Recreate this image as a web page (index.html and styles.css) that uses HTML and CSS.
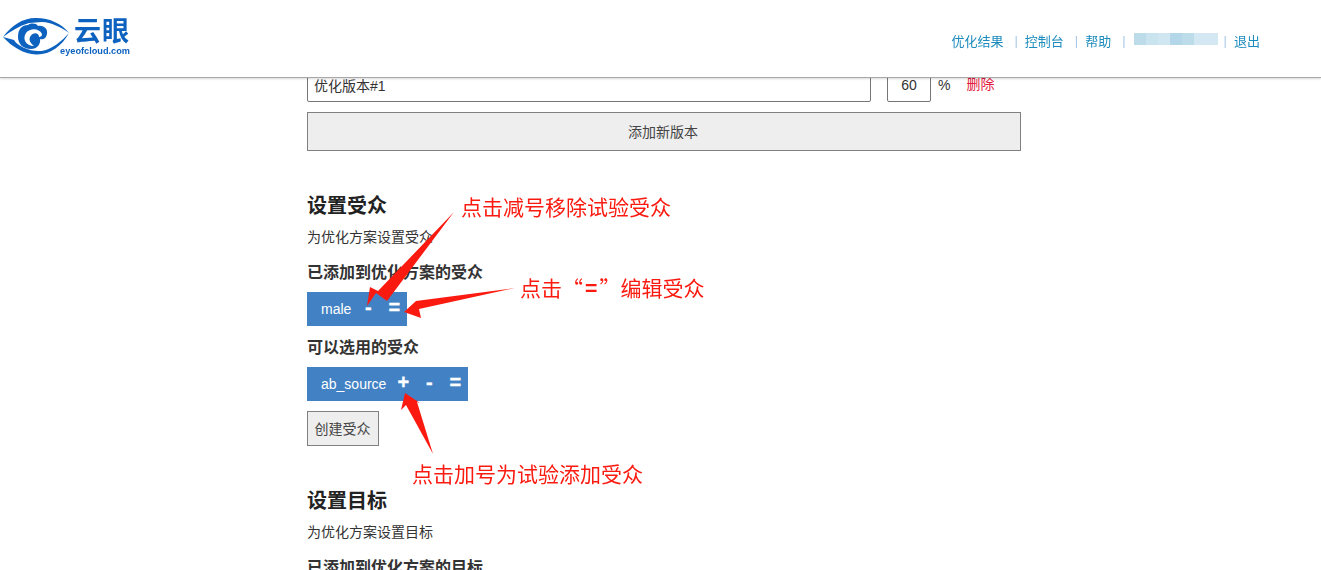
FILE: index.html
```html
<!DOCTYPE html>
<html lang="zh-CN">
<head>
<meta charset="utf-8">
<title>云眼</title>
<link rel="stylesheet" href="styles.css">
</head>
<body>
<header class="topbar">
  <a class="logo" href="#">
    <svg class="logo-eye" width="72" height="42" viewBox="0 15 72 42">
      <path d="M3 37C11 26 22 18 36 18C50 18 62 24 69 33C61 27 51 22.500 42 22L29 23C19 26 11 31 3 37Z" fill="#0d62c0"/>
      <path d="M3 37C12 47 24 54 36 54.500C50 55 62 46 69 33C61 42 53 48 44 50.500C33 53 18 47 14 40Z" fill="#0d62c0"/>
      <path d="M18 37C18 29 22 25 28 25C31 23 36 23 38 26C44 25 48 29 47 34C46 39 42 40 40 39C41 44 37 49 31 49C23 49 18 44 18 37Z" fill="#0d62c0"/>
      <path d="M42 34C39 28 30 28 26 33C22 39 26 46 34 46C30 43 28 39 31 35.500C34 32 39 33 39 37C41 37 42 36 42 34Z" fill="#fff"/>
    </svg>
    <span class="logo-words">
      <span class="logo-cn">云眼</span>
      <span class="logo-en">eyeofcloud.com</span>
    </span>
  </a>
  <nav class="nav">
    <a href="#">优化结果</a><i class="sep">|</i>
    <a href="#">控制台</a><i class="sep">|</i>
    <a href="#">帮助</a><i class="sep">|</i>
    <span class="blur-name"><b></b><b></b><b></b><b></b><b></b><b></b><b></b></span><i class="sep">|</i>
    <a href="#">退出</a>
  </nav>
</header>

<main class="content">
  <div class="version-row">
    <input class="name-input" type="text" value="优化版本#1">
    <input class="pct-input" type="text" value="60">
    <span class="pct">%</span>
    <a class="del" href="#">删除</a>
  </div>
  <button class="add-version" type="button">添加新版本</button>

  <h2 class="title first">设置受众</h2>
  <p class="desc">为优化方案设置受众</p>
  <h3 class="label">已添加到优化方案的受众</h3>
  <div class="tag"><span class="tag-name">male</span><span class="op">-</span><span class="op">=</span></div>
  <h3 class="label second">可以选用的受众</h3>
  <div class="tag"><span class="tag-name">ab_source</span><span class="op">+</span><span class="op">-</span><span class="op">=</span></div>
  <button class="create" type="button">创建受众</button>

  <h2 class="title goal">设置目标</h2>
  <p class="desc">为优化方案设置目标</p>
  <h3 class="label">已添加到优化方案的目标</h3>
</main>

<svg class="arrows" width="1321" height="570" viewBox="0 0 1321 570">
  <path d="M454 212L387 301L376 293L367 306L370 287L378 291Z" fill="#fb1a10"/>
  <path d="M515 288L416 301L404 312L421 318L419 309Z" fill="#fb1a10"/>
  <path d="M433 454L417 402L420 403L405 393L401 410L406 405Z" fill="#fb1a10"/>
</svg>
<div class="note note-a">点击减号移除试验受众</div>
<div class="note note-b">点击“<b class="eq">=</b>”编辑受众</div>
<div class="note note-c">点击加号为试验添加受众</div>
</body>
</html>
```
FILE: styles.css
```css
* { box-sizing: border-box; }
html, body { height: 570px; overflow: hidden; }
body {
  margin: 0;
  background: #fff;
  color: #333;
  font-family: "Liberation Sans", "Noto Sans CJK SC", sans-serif;
  font-size: 14px;
}
.topbar {
  position: fixed;
  top: 0; left: 0; right: 0;
  z-index: 2;
  height: 78px;
  display: flex;
  align-items: flex-start;
  justify-content: space-between;
  padding: 0 61px 0 0;
  background: #fff;
  border-bottom: 1px solid #a8a8a8;
  box-shadow: 0 1px 2px rgba(0,0,0,.15);
}
.logo { display: flex; text-decoration: none; padding-top: 15px; }
.logo-eye { display: block; }
.logo-words { display: flex; flex-direction: column; align-items: flex-end; width: 58px; }
.logo-cn { font-size: 27px; line-height: 30px; font-weight: 700; color: #0d62c0; letter-spacing: 1px; margin-top: 2px; }
.logo-en { font-size: 9.2px; line-height: 10px; font-weight: 700; color: #0d62c0; white-space: nowrap; margin-top: -1px; }
.nav { display: flex; align-items: center; height: 20px; margin-top: 30px; font-size: 13px; }
.nav a { color: #1c8bbd; text-decoration: none; }
.sep { font-style: normal; color: #a9c8e6; margin: 0 7px 0 11px; font-size: 13px; }
.blur-name { display: flex; width: 84px; height: 12px; margin: -2px -5px 0 1px; background: #eef5fa; }
.blur-name b { flex: 1; background: #bcdcea; }
.blur-name b:nth-child(2) { background: #c9e3ef; }
.blur-name b:nth-child(3) { background: #d0e6f1; }
.blur-name b:nth-child(4) { background: #b3d7e8; }
.blur-name b:nth-child(6), .blur-name b:nth-child(7) { background: #d3e8f2; }

.content { width: 714px; margin-left: 307px; padding-top: 74px; }
.version-row { display: flex; align-items: flex-start; height: 28px; }
.name-input, .pct-input {
  height: 28px;
  border: 1px solid #767676;
  border-radius: 2px;
  background: #fff;
  color: #333;
  font: inherit;
  outline: none;
}
.name-input { width: 564px; padding: 0 6px 6px; }
.pct-input { width: 44px; margin-left: 16px; text-align: center; padding: 0 0 6px; }
.pct { margin-left: 7px; line-height: 22px; }
.del { margin-left: 16px; color: #e4183c; text-decoration: none; line-height: 20px; }
.add-version {
  display: block;
  width: 100%;
  height: 39px;
  margin-top: 10px;
  background: #eee;
  border: 1px solid #808080;
  color: #444;
  font: inherit;
  padding: 0 2px 2px 0;
}
.title { margin: 0; font-size: 20px; line-height: 28px; font-weight: 700; color: #222; }
.title.first { margin-top: 41px; }
.title.goal { margin-top: 41px; }
.desc { margin: 7px 0 0; font-size: 14px; line-height: 20px; color: #333; }
.label { margin: 16px 0 0; font-size: 16px; line-height: 20px; font-weight: 700; color: #333; }
.label.second { margin-top: 12px; }
.tag {
  display: flex;
  align-items: center;
  width: max-content;
  height: 34px;
  margin-top: 9px;
  padding-left: 14px;
  background: #4282c4;
  color: #fff;
}
.tag-name { margin-right: 4px; line-height: 34px; }
.op { width: 26px; text-align: center; font-size: 20px; font-weight: 700; line-height: 30px; padding-bottom: 4px; -webkit-text-stroke: .3px #fff; }
.create {
  display: block;
  width: 72px;
  height: 35px;
  margin-top: 10px;
  padding: 0 1px 1px 0;
  background: #eee;
  border: 1px solid #808080;
  color: #444;
  font: inherit;
}
.arrows { position: fixed; top: 0; left: 0; z-index: 3; pointer-events: none; }
.note { position: fixed; z-index: 4; font-family: "Noto Sans CJK SC", "Liberation Sans", sans-serif; font-size: 21px; line-height: 28px; color: #fb1a10; white-space: nowrap; }
.eq { margin: 0 2px; font-weight: 700; }
.note-a { left: 461px; top: 192px; }
.note-b { left: 520px; top: 273px; }
.note-c { left: 412px; top: 459px; }
```
